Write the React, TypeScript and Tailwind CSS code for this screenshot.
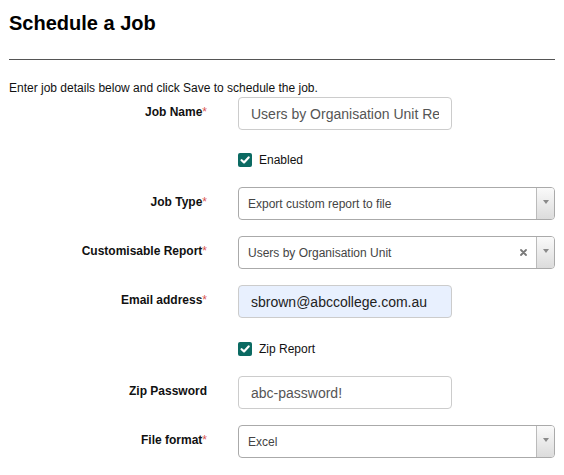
import type { ReactNode } from "react";

interface FieldRowProps {
  label: string;
  required?: boolean;
  className?: string;
  children: ReactNode;
}

const FieldRow = ({ label, required, className, children }: FieldRowProps) => (
  <div className={`flex items-start ${className ?? ""}`}>
    <div className="w-[198px] shrink-0 pt-[7px] text-right text-[12px] leading-[16px] font-bold text-[#111]">
      {label}
      {required && <span className="font-normal text-[#d9534f]">*</span>}
    </div>
    <div className="ml-[31px]">{children}</div>
  </div>
);

const Checkbox = ({ label, className }: { label: string; className?: string }) => (
  <div className={`ml-[229px] flex h-[14px] items-center gap-[7px] ${className ?? ""}`}>
    <span className="flex h-[14px] w-[14px] items-center justify-center rounded-[2px] bg-[#0b6a62]">
      <svg width="10" height="10" viewBox="0 0 10 10">
        <path d="M1.6 5.2 L4 7.4 L8.6 2.4" fill="none" stroke="white" strokeWidth="2.2" strokeLinecap="round" strokeLinejoin="round" />
      </svg>
    </span>
    <span className="text-[12px] leading-[16px] text-[#111]">{label}</span>
  </div>
);

const TextInput = ({ value, autofill }: { value: string; autofill?: boolean }) => (
  <input
    readOnly
    value={value}
    className={`h-[33px] w-[214px] rounded-[4px] border border-[#ccc] px-[12px] text-[14px] outline-none ${
      autofill ? "bg-[#e8f0fe] text-[#222]" : "bg-white text-[#555]"
    }`}
  />
);

const Select = ({ value, clearable }: { value: string; clearable?: boolean }) => (
  <div className="flex h-[33px] w-[317px] rounded-[4px] border border-[#aaa] bg-white">
    <div className="flex flex-1 items-center pl-[9px] text-[12px] text-[#444]">{value}</div>
    {clearable && (
      <div className="flex w-[16px] items-center justify-start">
        <svg width="7" height="7" viewBox="0 0 7 7">
          <path d="M1 1 L6 6 M6 1 L1 6" stroke="#7a7a7a" strokeWidth="1.8" strokeLinecap="round" />
        </svg>
      </div>
    )}
    <div className="flex w-[18px] items-start justify-center rounded-r-[3px] border-l border-[#bbb] bg-linear-to-b from-[#fafafa] to-[#dcdcdc] pt-[12px]">
      <svg width="6" height="4" viewBox="0 0 6 4">
        <path d="M0 0 L6 0 L3 4 Z" fill="#8a8a8a" />
      </svg>
    </div>
  </div>
);

const App = () => {
  return (
    <div className="min-h-screen bg-white px-[9px] font-['Liberation_Sans',Arial,sans-serif] text-[#111]">
      <h1 className="pt-[11px] text-[20px] leading-[24px] font-bold text-black">Schedule a Job</h1>
      <div className="mt-[24px] h-px bg-[#555]" />
      <p className="mt-[20px] text-[12px] leading-[16px]">
        Enter job details below and click Save to schedule the job.
      </p>

      <div className="mt-px flex flex-col">
        <FieldRow label="Job Name" required>
          <TextInput value="Users by Organisation Unit Report" />
        </FieldRow>

        <Checkbox label="Enabled" className="mt-[23px]" />

        <FieldRow label="Job Type" required className="mt-[20px]">
          <Select value="Export custom report to file" />
        </FieldRow>

        <FieldRow label="Customisable Report" required className="mt-[16px]">
          <Select value="Users by Organisation Unit" clearable />
        </FieldRow>

        <FieldRow label="Email address" required className="mt-[16px]">
          <TextInput value="sbrown@abccollege.com.au" autofill />
        </FieldRow>

        <Checkbox label="Zip Report" className="mt-[24px]" />

        <FieldRow label="Zip Password" className="mt-[20px]">
          <TextInput value="abc-password!" />
        </FieldRow>

        <FieldRow label="File format" required className="mt-[16px]">
          <Select value="Excel" />
        </FieldRow>
      </div>
    </div>
  );
};

export default App;
